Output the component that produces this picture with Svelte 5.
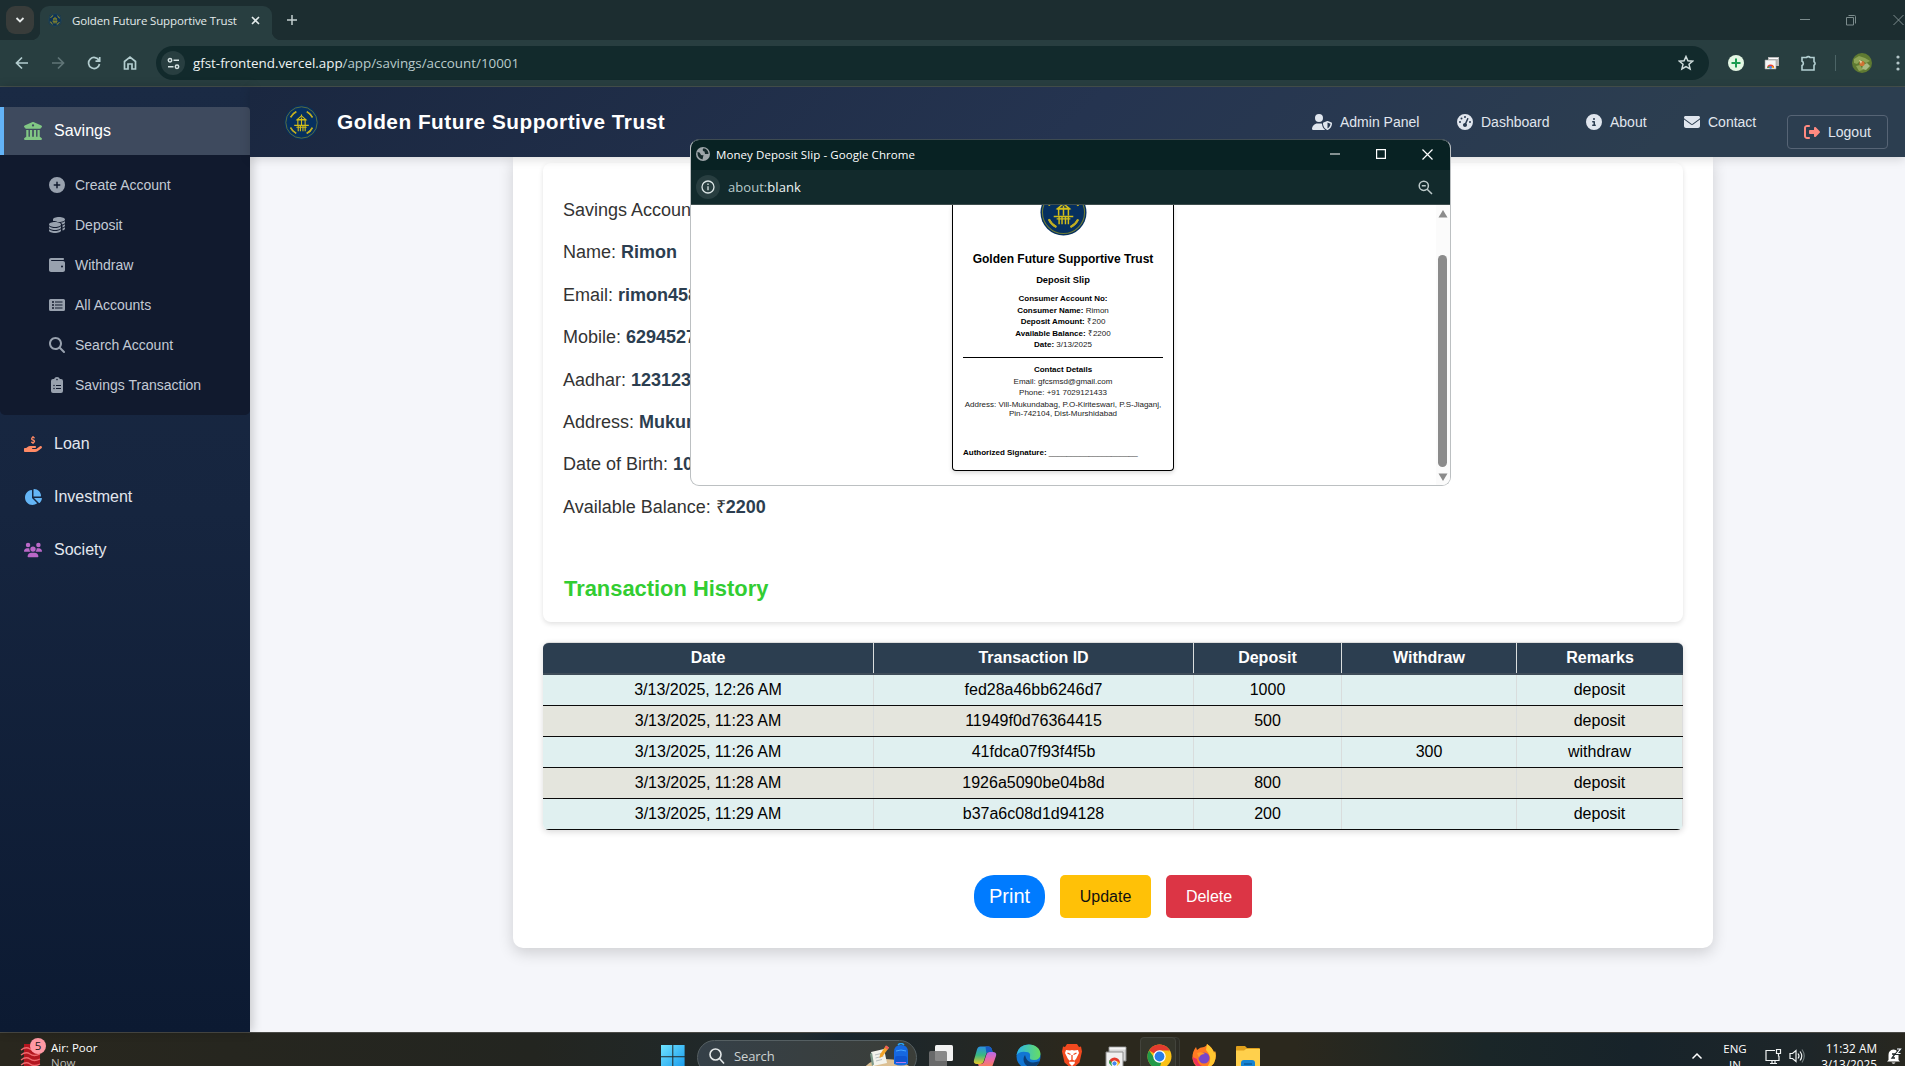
<script>
  const subItems = [
    { label: 'Create Account', icon: 'plus' },
    { label: 'Deposit', icon: 'coins' },
    { label: 'Withdraw', icon: 'wallet' },
    { label: 'All Accounts', icon: 'list' },
    { label: 'Search Account', icon: 'search' },
    { label: 'Savings Transaction', icon: 'clipboard' }
  ];
  const sections = [
    { label: 'Loan', icon: 'hand', tone: 'coral' },
    { label: 'Investment', icon: 'pie', tone: 'blue' },
    { label: 'Society', icon: 'users', tone: 'purple' }
  ];
  const navItems = [
    { label: 'Admin Panel', icon: 'shield', cls: 'admin' },
    { label: 'Dashboard', icon: 'gauge', cls: 'dash' },
    { label: 'About', icon: 'info', cls: 'about' },
    { label: 'Contact', icon: 'mail', cls: 'contact' }
  ];
  const details = [
    ['Savings Account No: ', '10001'],
    ['Name: ', 'Rimon'],
    ['Email: ', 'rimon458@gmail.com'],
    ['Mobile: ', '6294527000'],
    ['Aadhar: ', '123123123123'],
    ['Address: ', 'Mukundabag'],
    ['Date of Birth: ', '10/10/2000'],
    ['Available Balance: ₹', '2200']
  ];
  const rows = [
    ['3/13/2025, 12:26 AM', 'fed28a46bb6246d7', '1000', '', 'deposit'],
    ['3/13/2025, 11:23 AM', '11949f0d76364415', '500', '', 'deposit'],
    ['3/13/2025, 11:26 AM', '41fdca07f93f4f5b', '', '300', 'withdraw'],
    ['3/13/2025, 11:28 AM', '1926a5090be04b8d', '800', '', 'deposit'],
    ['3/13/2025, 11:29 AM', 'b37a6c08d1d94128', '200', '', 'deposit']
  ];
  const slip = [
    ['Consumer Account No:', ''],
    ['Consumer Name:', 'Rimon'],
    ['Deposit Amount:', '₹200'],
    ['Available Balance:', '₹2200'],
    ['Date:', '3/13/2025']
  ];
  const icons = {
    bank: { w: 512, d: 'M243.4 2.6l-224 96c-14 6-21.8 21-18.7 35.8S16.8 160 32 160v8c0 13.3 10.7 24 24 24H456c13.3 0 24-10.7 24-24v-8c15.2 0 28.3-10.7 31.3-25.6s-4.8-29.9-18.7-35.8l-224-96c-8-3.4-17.2-3.4-25.2 0zM128 224H64V420.3c-.6 .3-1.2 .7-1.8 1.1l-48 32c-11.7 7.8-17 22.4-12.9 35.9S17.9 512 32 512H480c14.1 0 26.5-9.2 30.6-22.7s-1.1-28.1-12.9-35.9l-48-32c-.6-.4-1.2-.7-1.8-1.1V224H384V416H344V224H280V416H232V224H168V416H128V224zM256 64a32 32 0 1 1 0 64 32 32 0 1 1 0-64z' },
    plus: { w: 512, d: 'M256 512A256 256 0 1 0 256 0a256 256 0 1 0 0 512zM232 344V280H168c-13.3 0-24-10.7-24-24s10.7-24 24-24h64V168c0-13.3 10.7-24 24-24s24 10.7 24 24v64h64c13.3 0 24 10.7 24 24s-10.7 24-24 24H280v64c0 13.3-10.7 24-24 24s-24-10.7-24-24z' },
    coins: { w: 512, d: 'M320 0C426 0 512 36 512 80S426 160 320 160c-17 0-34-1-50-3C236 138 186 128 160 128c-10 0-20 0-30 1C129 110 128 95 128 80C128 36 214 0 320 0zM512 134v42c0 27-33 51-83 66c-6-25-26-45-52-60c54-8 101-25 135-48zM512 230v42c0 27-32 51-80 65v-62c32-11 59-26 80-45zM512 326v42c0 27-32 50-80 65v-62c32-11 59-26 80-45zM192 160c106 0 192 36 192 80s-86 80-192 80S0 284 0 240s86-80 192-80zM0 294c45 36 117 58 192 58s147-22 192-58v42c0 44-86 80-192 80S0 380 0 336v-42zM0 390c45 36 117 58 192 58s147-22 192-58v42c0 44-86 80-192 80S0 476 0 432v-42z' },
    wallet: { w: 512, d: 'M64 32C28.7 32 0 60.7 0 96V416c0 35.3 28.7 64 64 64H448c35.3 0 64-28.7 64-64V192c0-35.3-28.7-64-64-64H80c-8.8 0-16-7.2-16-16s7.2-16 16-16H448c17.7 0 32-14.3 32-32s-14.3-32-32-32H64zM416 272a32 32 0 1 1 0 64 32 32 0 1 1 0-64z' },
    list: { w: 512, d: 'M48 64H464a48 48 0 0 1 48 48V400a48 48 0 0 1-48 48H48a48 48 0 0 1-48-48V112A48 48 0 0 1 48 64zM128 128a32 32 0 1 0 0 64 32 32 0 1 0 0-64zM128 224a32 32 0 1 0 0 64 32 32 0 1 0 0-64zM128 320a32 32 0 1 0 0 64 32 32 0 1 0 0-64zM192 144v32H432v-32zM192 240v32H432v-32zM192 336v32H432v-32z' },
    search: { w: 512, d: 'M416 208c0 45.9-14.9 88.3-40 122.7L502.6 457.4c12.5 12.5 12.5 32.8 0 45.3s-32.8 12.5-45.3 0L330.7 376c-34.4 25.2-76.8 40-122.7 40C93.1 416 0 322.9 0 208S93.1 0 208 0S416 93.1 416 208zM208 352a144 144 0 1 0 0-288 144 144 0 1 0 0 288z' },
    clipboard: { w: 384, d: 'M102 64C110 26 145 0 192 0s82 26 90 64H320a64 64 0 0 1 64 64V448a64 64 0 0 1-64 64H64a64 64 0 0 1-64-64V128A64 64 0 0 1 64 64zM192 56a26 26 0 1 0 0 52 26 26 0 1 0 0-52zM96 248a24 24 0 1 0 0 48 24 24 0 1 0 0-48zM96 344a24 24 0 1 0 0 48 24 24 0 1 0 0-48zM160 256v32H320v-32zM160 352v32H320v-32z' },
    hand: { w: 576, d: 'M559.7 392.2c17.8-13.1 21.6-38.1 8.5-55.9s-38.1-21.6-55.9-8.5L392.6 416H272c-8.8 0-16-7.2-16-16s7.2-16 16-16h16 64c17.7 0 32-14.3 32-32s-14.3-32-32-32H288 272 193.7c-29.1 0-57.3 9.9-80 28L68.8 384H32c-17.7 0-32 14.3-32 32v64c0 17.7 14.3 32 32 32H192 352.5c29 0 57.3-9.3 80.7-26.5l126.6-93.3zM268 0h40v32l36 8v38c-30-8-78-14-78 6c0 26 90 14 90 84c0 34-22 50-48 56v32h-40v-30l-44-12v-40c36 16 92 20 92-4c0-28-90-18-90-86c0-28 18-48 42-54z' },
    pie: { w: 576, d: 'M304 240V16.6c0-9 7-16.6 16-16.6C443.7 0 544 100.3 544 224c0 9-7.6 16-16.6 16H304zM32 272C32 150.7 122.1 50.3 239 34.3c9.2-1.3 17 6.1 17 15.4V288L412.5 444.5c6.7 6.7 6.2 17.7-1.5 23.1C371.8 495.6 323.8 512 272 512C139.5 512 32 404.6 32 272zm526.4 16c9.3 0 16.6 7.8 15.4 17c-7.7 55.9-34.6 105.6-73.9 142.3c-6 5.6-15.4 5.2-21.2-.7L320 288H558.4z' },
    users: { w: 640, d: 'M144 0a80 80 0 1 1 0 160A80 80 0 1 1 144 0zM512 0a80 80 0 1 1 0 160A80 80 0 1 1 512 0zM0 298.7C0 239.8 47.8 192 106.7 192h42.7c15.9 0 31 3.5 44.6 9.7c-1.3 7.2-1.9 14.7-1.9 22.3c0 38.2 16.8 72.5 43.3 96c-.2 0-.4 0-.7 0H21.3C9.6 320 0 310.4 0 298.7zM405.3 320c-.2 0-.4 0-.7 0c26.6-23.5 43.3-57.8 43.3-96c0-7.6-.7-15-1.9-22.3c13.6-6.3 28.7-9.7 44.6-9.7h42.7C592.2 192 640 239.8 640 298.7c0 11.8-9.6 21.3-21.3 21.3H405.3zM224 224a96 96 0 1 1 192 0 96 96 0 1 1 -192 0zM128 485.3C128 411.7 187.7 352 261.3 352H378.7C452.3 352 512 411.7 512 485.3c0 14.7-11.9 26.7-26.7 26.7H154.7c-14.7 0-26.7-11.9-26.7-26.7z' },
    shield: { w: 640, d: 'M224 256A128 128 0 1 0 224 0a128 128 0 1 0 0 256zm-45.7 48C79.8 304 0 383.8 0 482.3C0 498.7 13.3 512 29.7 512H418.3c1.8 0 3.5-.2 5.3-.5c-76.3-55.1-99.8-141-103.1-200.2c-16.1-4.8-33.1-7.3-50.7-7.3H178.3zm308.8-78.3l-120 48C358 277.4 352 286.2 352 296c0 63.3 25.9 168.8 134.8 214.2c5.9 2.5 12.6 2.5 18.5 0C614.1 464.8 640 359.3 640 296c0-9.8-6-18.6-15.1-22.3l-120-48c-5.7-2.3-12.1-2.3-17.8 0zM591.4 312c-3.9 50.7-27.2 116.7-95.4 149.7V273.8L591.4 312z' },
    gauge: { w: 512, d: 'M0 256a256 256 0 1 1 512 0A256 256 0 1 1 0 256zM288 96a32 32 0 1 0 -64 0 32 32 0 1 0 64 0zM256 416c35.3 0 64-28.7 64-64c0-17.4-6.9-33.1-18.1-44.6L366 161.7c5.3-12.1-.2-26.3-12.3-31.6s-26.3 .2-31.6 12.3L257.9 288c-.6 0-1.3 0-1.9 0c-35.3 0-64 28.7-64 64s28.7 64 64 64zM176 144a32 32 0 1 0 -64 0 32 32 0 1 0 64 0zM96 288a32 32 0 1 0 0-64 32 32 0 1 0 0 64zm352-32a32 32 0 1 0 -64 0 32 32 0 1 0 64 0z' },
    info: { w: 512, d: 'M256 512A256 256 0 1 0 256 0a256 256 0 1 0 0 512zM216 336h24V272H216c-13.3 0-24-10.7-24-24s10.7-24 24-24h48c13.3 0 24 10.7 24 24v88h8c13.3 0 24 10.7 24 24s-10.7 24-24 24H216c-13.3 0-24-10.7-24-24s10.7-24 24-24zm40-208a32 32 0 1 1 0 64 32 32 0 1 1 0-64z' },
    mail: { w: 512, d: 'M48 64C21.5 64 0 85.5 0 112c0 15.1 7.1 29.3 19.2 38.4L236.8 313.6c11.4 8.5 27 8.5 38.4 0L492.8 150.4c12.1-9.1 19.2-23.3 19.2-38.4c0-26.5-21.5-48-48-48H48zM0 176V384c0 35.3 28.7 64 64 64H448c35.3 0 64-28.7 64-64V176L294.4 339.2c-22.8 17.1-54 17.1-76.8 0L0 176z' },
    logout: { w: 512, d: 'M377.9 105.9L500.7 228.7c7.2 7.2 11.3 17.1 11.3 27.3s-4.1 20.1-11.3 27.3L377.9 406.1c-6.4 6.4-15 9.9-24 9.9c-18.7 0-33.9-15.2-33.9-33.9l0-62.1-128 0c-17.7 0-32-14.3-32-32l0-64c0-17.7 14.3-32 32-32l128 0 0-62.1c0-18.7 15.2-33.9 33.9-33.9c9 0 17.6 3.6 24 9.9zM160 96L96 96c-17.7 0-32 14.3-32 32l0 256c0 17.7 14.3 32 32 32l64 0c17.7 0 32 14.3 32 32s-14.3 32-32 32l-64 0c-53 0-96-43-96-96L0 128C0 75 43 32 96 32l64 0c17.7 0 32 14.3 32 32s-14.3 32-32 32z' }
  };
</script>

{#snippet glyph(name)}
  <svg class="glyph" viewBox="0 0 {icons[name].w} 512"><path fill-rule="evenodd" d={icons[name].d} /></svg>
{/snippet}

{#snippet crest()}
  <svg class="crest" viewBox="0 0 48 48" fill="none">
    <circle cx="24" cy="24" r="23.5" fill="#06305f" />
    <circle cx="24" cy="24" r="21.5" stroke="#6f7c36" stroke-width="1.1" />
    <circle cx="24" cy="24" r="16.5" stroke="#c0ad22" stroke-width="2" stroke-dasharray="11 15 11 14.900" transform="rotate(25 24 24)" />
    <circle cx="24" cy="24" r="16.5" stroke="#c0ad22" stroke-width="2" stroke-dasharray="11 15 11 14.900" transform="rotate(205 24 24)" />
    <path d="M24 13v3M24 15l-6 5h12zM17 20.5h14M19 21v6M24 17v10M29 21v6M14 28h20M17 30.5h14M19.500 28v8M22.500 28v8M26 28v8M29 28v8" stroke="#d2bd18" stroke-width="1.5" />
  </svg>
{/snippet}

<div class="screen">
  <div class="tabstrip">
    <div class="tabmenu"><svg width="10" height="10" viewBox="0 0 10 10"><path d="M1.500 3 5 6.500 8.500 3" fill="none" stroke="#e4e8e8" stroke-width="1.8" /></svg></div>
    <div class="tab">
      <span class="fav">{@render crest()}</span>
      <span class="tabtitle">Golden Future Supportive Trust</span>
      <svg width="9" height="9" viewBox="0 0 9 9"><path d="M1 1l7 7M8 1 1 8" stroke="#e3ebeb" stroke-width="1.6" /></svg>
    </div>
    <svg class="newtab" width="12" height="12" viewBox="0 0 12 12"><path d="M6 1v10M1 6h10" stroke="#c4d0d0" stroke-width="1.5" /></svg>
    <div class="winctl">
      <svg width="10" height="12" viewBox="0 0 10 12"><path d="M0 5.500h10" stroke="#7c8c8d" /></svg>
      <svg width="11" height="12" viewBox="0 0 11 12"><path d="M.5 3.500h7v7.500h-7zM2.500 1.500h6q1 0 1 1v7" fill="none" stroke="#7c8c8d" /></svg>
      <svg width="11" height="12" viewBox="0 0 11 12"><path d="M.5 1l10 10M10.500 1l-10 10" stroke="#7c8c8d" /></svg>
    </div>
  </div>

  <div class="toolbar">
    <div class="toolicons">
      <svg width="14" height="14" viewBox="0 0 14 14"><path d="M13 7H2M7 1.500 1.500 7 7 12.500" /></svg>
      <svg class="dim" width="14" height="14" viewBox="0 0 14 14"><path d="M1 7h11M7 1.500 12.500 7 7 12.500" /></svg>
      <svg width="14" height="14" viewBox="0 0 14 14"><path d="M12 4.500A5.500 5.500 0 1 0 12.500 8M12.700 1v4.200H8.500" /></svg>
      <svg width="14" height="14" viewBox="0 0 14 14"><path d="M1.500 5.500 7 1.200l5.500 4.300V13H9V8H5v5H1.500z" /></svg>
    </div>
    <div class="omnibox">
      <div class="siteinfo"><svg width="13" height="13" viewBox="0 0 13 13" fill="none" stroke="#d5e2e2" stroke-width="1.5"><circle cx="3" cy="3.200" r="1.700" /><path d="M6.500 3.200h5.500M1 9.800h5.500" /><circle cx="10" cy="9.800" r="1.700" /></svg></div>
      <span class="url"><b>gfst-frontend.vercel.app</b>/app/savings/account/10001</span>
      <svg class="star" width="16" height="16" viewBox="0 0 16 16"><path d="M8 1.500l1.900 4.300 4.700.4-3.600 3.100 1.100 4.600L8 11.500l-4.100 2.400L5 9.300 1.400 6.200l4.700-.4z" fill="none" stroke="#cfdcdc" stroke-width="1.500" /></svg>
    </div>
    <div class="exts">
      <svg width="18" height="18" viewBox="0 0 18 18"><circle cx="9" cy="9" r="8" fill="#e4f7e4" /><path d="M9 4.500v9M4.500 9h9" stroke="#1b9c51" stroke-width="2" /></svg>
      <svg width="16" height="16" viewBox="0 0 16 16"><path d="M4 2h11v9H4z" fill="#b9b9b9" /><path d="M5 3.500h9" stroke="#fff" /><path d="M1 5h11v9H1z" fill="#f5f5f5" stroke="#999" stroke-width=".6" /><path d="M3 13a3.600 3.600 0 0 1 7.200 0z" fill="#ea4335" /><path d="M3 13l1.800-2 1 2z" fill="#34a853" /><path d="M10.200 13l-2-2-1 2z" fill="#fbbc05" /><circle cx="6.600" cy="12.400" r="1.300" fill="#4285f4" /></svg>
      <svg width="18" height="18" viewBox="0 0 18 18"><path d="M2 3.500h4.500a2 1.600 0 0 1 3.600 0H14v4.300a1.600 1.800 0 0 1 0 3.400V16H2v-4.500a2.300 2.300 0 0 0 0-4.200z" fill="none" stroke="#b3d0d2" stroke-width="1.600" /></svg>
      <span class="sep"></span>
      <svg width="20" height="20" viewBox="0 0 20 20"><circle cx="10" cy="10" r="10" fill="#5f7a32" /><path d="M2 6l5-3 6 2 5 3-4 2-5-3-4 4-3-1zM4 13l4-1 3 5-4 1z" fill="#8da456" /><path d="M11 12l4-2 3 3-4 4-4-1z" fill="#a7ba82" /><circle cx="10" cy="10.500" r="2.600" fill="#cf7132" /><path d="M7 7l3 1-1 3z" fill="#ddd0a0" /></svg>
      <svg width="4" height="16" viewBox="0 0 4 16" fill="#b4c6c8"><circle cx="2" cy="2" r="1.600" /><circle cx="2" cy="8" r="1.600" /><circle cx="2" cy="14" r="1.600" /></svg>
    </div>
  </div>

  <div class="app">
    <nav class="sidebar">
      <div class="item active"><span class="ic green">{@render glyph('bank')}</span>Savings</div>
      <div class="submenu">
        {#each subItems as s}
          <div class="sub"><span class="sic">{@render glyph(s.icon)}</span>{s.label}</div>
        {/each}
      </div>
      {#each sections as s}
        <div class="item"><span class="ic {s.tone}">{@render glyph(s.icon)}</span>{s.label}</div>
      {/each}
    </nav>

    <div class="main">
      <header>
        <span class="brandlogo">{@render crest()}</span>
        <h1>Golden Future Supportive Trust</h1>
        <div class="links">
          {#each navItems as n}
            <a class={n.cls} href="#top"><span class="nic">{@render glyph(n.icon)}</span>{n.label}</a>
          {/each}
        </div>
        <div class="logout"><span class="nic">{@render glyph('logout')}</span>Logout</div>
      </header>

      <section class="panel">
        <div class="card">
          {#each details as [k, v]}
            <p>{k}<strong>{v}</strong></p>
          {/each}
          <h2>Transaction History</h2>
        </div>
        <div class="table">
          <div class="tr head">
            <span>Date</span><span>Transaction ID</span><span>Deposit</span><span>Withdraw</span><span>Remarks</span>
          </div>
          {#each rows as r}
            <div class="tr">{#each r as c}<span>{c}</span>{/each}</div>
          {/each}
        </div>
        <div class="buttons">
          <button class="print">Print</button>
          <button class="update">Update</button>
          <button class="delete">Delete</button>
        </div>
      </section>
    </div>
  </div>

  <footer class="taskbar">
    <div class="weather">
      <svg width="28" height="29" viewBox="0 0 28 29"><path d="M5 6h16v20l-4 3H5z" fill="#b3161f" /><path d="M2 12q5-4 9-1t10 0M2 17q5-4 9-1t10 0M2 22q5-4 9-1t10 0M2 27q5-4 9-1t10 0" fill="none" stroke="#ee6a6e" stroke-width="1.300" /><circle cx="19" cy="8" r="8" fill="#ff99a4" /><text x="19" y="12.300" text-anchor="middle" font-size="11.500" fill="#1a1a1a">5</text></svg>
      <div class="wtext"><span>Air: Poor</span><span class="soft">Now</span></div>
    </div>
    <div class="dock">
      <svg class="win" width="24" height="24" viewBox="0 0 24 24"><defs><linearGradient id="wg" x1="0" y1="0" x2="1" y2="1"><stop offset="0" stop-color="#6fe3ff" /><stop offset="1" stop-color="#1598ec" /></linearGradient></defs><path d="M0 0h11.300v11.300H0zM12.300 0h11.300v11.300H12.300zM0 12.300h11.300V24H0zM12.300 12.300h11.300V24H12.300z" fill="url(#wg)" /></svg>
      <div class="searchbox">
        <svg width="16" height="16" viewBox="0 0 16 16" fill="none" stroke="#e3e7e8" stroke-width="1.600"><circle cx="6.500" cy="6.500" r="5.500" /><path d="M10.500 10.500 15 15.500" /></svg>
        <span>Search</span>
        <svg class="study" width="46" height="26" viewBox="0 0 46 26"><path d="M2 24q6-8 21-8t23 7v3H2z" fill="#dcc093" /><path d="M8 9l13-3 3 14-14 3z" fill="#f3f3ec" /><path d="M7 11l2-1.500 2 12-2 1.500z" fill="#7e9a8a" /><path d="M12 12l8-2M12.500 15l8-2M13 18l6-1.500" stroke="#a9b1b4" stroke-width=".8" /><path d="M23 2.500l3 2-6.500 9-3 1.500.5-3.500z" fill="#f2a329" /><path d="M23 2.500l3 2-1.300 2.200-3-2z" fill="#ef5c58" /><path d="M31 9q0-7 7-7t7 7v12q-7 3-14 0z" fill="#1668e0" /><path d="M35 2q3-3 6 0" fill="none" stroke="#2aa3f5" stroke-width="1.500" /><rect x="32" y="13" width="12" height="7" rx="2" fill="#0f55d0" /><path d="M33 8q5-2 10 0" stroke="#45a5ff" fill="none" /><path d="M33 19.500h10" stroke="#b678e8" /></svg>
      </div>
      <svg class="tv" width="25" height="24" viewBox="0 0 25 24"><rect x="6" y="0" width="18" height="16" rx="1.500" fill="#f2f2f2" /><rect x="0" y="6" width="18" height="17" rx="1.500" fill="#777" fill-opacity=".85" /></svg>
      <svg class="cop" width="24" height="24" viewBox="0 0 24 24"><defs><linearGradient id="ca" x1="0" y1="0" x2="0" y2="1"><stop offset="0" stop-color="#2a8fe5" /><stop offset=".5" stop-color="#39b981" /><stop offset="1" stop-color="#e9c829" /></linearGradient><linearGradient id="cb" x1="0" y1="0" x2="0" y2="1"><stop offset="0" stop-color="#b56bea" /><stop offset=".5" stop-color="#ec68a6" /><stop offset="1" stop-color="#f9834f" /></linearGradient></defs><path d="M7.500 1.500h8.500q2 0 2.800 2.500l.8 3h-3.500q-2.500 0-3.300 3l-2 6q-.8 3-3.500 3H4Q0 19 1 15L4 4.500q.8-3 3.500-3z" fill="url(#ca)" /><path d="M12.500 1.500H16q2 0 2.800 2.500l.8 3h-3.500q-2 0-2.700 1.500z" fill="#175ac4" /><path d="M16.500 22.500H8q-2 0-2.600-2.500l-.3-1h2.400q3 0 3.800-3l2-6q.9-3 3.500-3H20q4 0 3 4l-3 8.500q-.8 3-3.500 3z" fill="url(#cb)" /></svg>
      <svg class="edge" width="25" height="25" viewBox="0 0 25 25"><defs><linearGradient id="eg"><stop offset="0" stop-color="#2bb5e9" /><stop offset="1" stop-color="#67dd61" /></linearGradient></defs><circle cx="12.500" cy="12.500" r="12" fill="#1176d3" /><path d="M.6 11Q2 .5 13 .5C20 .5 24.500 5 24.500 10q-.4 6-6.500 6-5 0-4-3 1-5-4-5-6-1-9.400 3z" fill="url(#eg)" /><path d="M9 11q-3 4 0 9 3 4 9 3 4-2 6-6-11 4-14-3z" fill="#0b3f77" /></svg>
      <svg class="brave" width="22" height="25" viewBox="0 0 22 25"><path d="M6 0h10l2 3 2-.5 1 5-2.500 11L11 25l-7.500-6.500L1 7.500l1-5L4 3z" fill="#f1491f" /><path d="M5 6l4 .5 2-.5 2 .5 4-.5 1 3-3 6-2 2 1 2-3 3-3-3 1-2-2-2-3-6z" fill="#fff" /><path d="M6.500 9l3 1.500M15.500 9l-3 1.500M11 11v5l-2 1h4l-2-1" stroke="#f1491f" stroke-width="1.300" fill="none" /></svg>
      <svg class="rdp" width="24" height="24" viewBox="0 0 24 24"><path d="M5 1h17v14H5z" fill="#d8d8d8" stroke="#8b8b8b" /><path d="M5.500 2.500h16" stroke="#f4f4f4" stroke-width="2" /><path d="M2 6h17v16H2z" fill="#f0f0f0" stroke="#8b8b8b" /><path d="M5 17a5.500 5.500 0 0 1 11 0z" fill="#e33b2e" /><path d="M5 17l.5-3 4 4-2 2z" fill="#2ca24c" /><path d="M16 17l-3-2-1 3 1 2z" fill="#f9bd15" /><circle cx="10.500" cy="17.500" r="2.600" fill="#4486ee" stroke="#fff" /></svg>
      <div class="chromestack"><div class="chromebox"><svg width="25" height="25" viewBox="0 0 25 25"><circle cx="12.500" cy="12.500" r="12" fill="#fbc116" /><path d="M12.500 12.500 2.100 6.500a12 12 0 0 1 20.800 0z" fill="#e33b2e" /><path d="M2.100 6.500l6 8.500 6 4-1.600 5.500A12 12 0 0 1 2.100 6.500z" fill="#229a48" /><path d="M12.500 6.500H23l-9 6z" fill="#fbc116" /><circle cx="12.500" cy="12.500" r="6.200" fill="#fff" /><circle cx="12.500" cy="12.500" r="4.900" fill="#2b7de9" /></svg></div></div>
      <svg class="fox" width="24" height="25" viewBox="0 0 24 25"><path d="M12 3q3-1 3-3 6 4 7 9l1-2q2 6-1 12-4 6-11 6Q2 24 .5 15 0 8 4 3l1 3q3-3 7-3z" fill="#ff7a22" /><path d="M15 0q6 4 7 9l1-2q2 6-1 12-3 4-8 5 5-5 4-11-1-4-4-7z" fill="#ffc630" /><path d="M.5 13q1 9 9 11.500l6-.5Q6 22 5 15z" fill="#f0325c" /><circle cx="12" cy="14" r="5.500" fill="#7846c8" /><path d="M5 9q5-2 8 1-5 0-6 4z" fill="#ff9a28" /></svg>
      <svg class="folder" width="25" height="24" viewBox="0 0 25 24"><path d="M1 1h8l2 2h12q1 0 1 1v19H0V2q0-1 1-1z" fill="#e0a01c" /><path d="M0 5.500h8l2-1.500h14v20H0z" fill="#ffd04c" /><path d="M5 24v-6q0-3 3-3h8q3 0 3 3v6z" fill="#1684d3" /><path d="M8 19h8" stroke="#0b5c9c" stroke-width="1.500" /></svg>
    </div>
    <div class="tray">
      <svg class="up" width="12" height="8" viewBox="0 0 12 8"><path d="M1.500 6.500 6 2l4.500 4.500" fill="none" stroke="#fff" stroke-width="1.500" /></svg>
      <div class="lang"><span>ENG</span><span>IN</span></div>
      <svg class="net" width="17" height="17" viewBox="0 0 17 17"><path d="M10 2.500H1v10h13V8M5 15.500h7M7 12.500v3M10 12.500v3M11.500 1.500h4v4h-4zM13.500 5.500v3" fill="none" stroke="#f0f3f3" stroke-width="1.200" /></svg>
      <svg class="vol" width="17" height="16" viewBox="0 0 17 16" fill="none" stroke="#f0f3f3" stroke-width="1.200"><path d="M1 5.500h2.500L7 2.500v11l-3.500-3H1zM9 5.500q2 2.500 0 5M11 3.500q3.500 4.500 0 9" /><path d="M13 1.500q4.500 6.500 0 13" stroke="#6f7a7b" /></svg>
      <div class="clock"><span>11:32 AM</span><span>3/13/2025</span></div>
      <svg class="bell" width="15" height="16" viewBox="0 0 15 16"><path d="M1.500 12V7q0-5 5-5.500 5 .5 5 5.500v5l1.500 1.500H0zM4.500 14.500h4q-2 2.500-4 0z" fill="#fff" /><path d="M5 6h3L5 10h3" stroke="#20292b" stroke-width="1.300" fill="none" /><path d="M10 1h3.500L10 5.500h3.500" stroke="#20292b" stroke-width="3.200" fill="none" /><path d="M10 1h3.500L10 5.500h3.500" stroke="#fff" stroke-width="1.200" fill="none" /></svg>
    </div>
  </footer>

  <div class="popup">
    <div class="ptitle">
      <svg width="14" height="14" viewBox="0 0 14 14"><circle cx="7" cy="7" r="7" fill="#9da5a9" /><path d="M1.500 5q2.500 0 3 2t3 1l-1 4.500Q1 11 1.500 5zM7 1.500Q6 4 8.500 4.500L9 7l3.500 0Q12.500 3 9 1.500z" fill="#15292b" /></svg>
      <span>Money Deposit Slip - Google Chrome</span>
      <div class="pctl">
        <svg width="10" height="10" viewBox="0 0 10 10"><path d="M0 5h10" stroke="#fff" stroke-width="1.200" /></svg>
        <svg width="10" height="10" viewBox="0 0 10 10"><path d="M.6.6h8.800v8.800H.6z" fill="none" stroke="#fff" stroke-width="1.200" /></svg>
        <svg width="11" height="11" viewBox="0 0 11 11"><path d="M.5.5l10 10M10.500.5l-10 10" stroke="#fff" stroke-width="1.200" /></svg>
      </div>
    </div>
    <div class="paddr">
      <div class="pinfo"><svg width="14" height="14" viewBox="0 0 14 14" fill="none" stroke="#dbe5e5" stroke-width="1.300"><circle cx="7" cy="7" r="6" /><path d="M7 6.200v4M7 3.500v1.400" /></svg></div>
      <span>about:<b>blank</b></span>
      <svg width="15" height="15" viewBox="0 0 15 15" fill="none" stroke="#bccaca" stroke-width="1.500"><circle cx="5.800" cy="5.800" r="4.600" /><path d="M9.200 9.200 14 14M3.800 5.800h4" /></svg>
    </div>
    <div class="pbody">
      <div class="slip">
        <div class="slogo">{@render crest()}</div>
        <h3>Golden Future Supportive Trust</h3>
        <h4>Deposit Slip</h4>
        <div class="lines">
          {#each slip as [k, v]}<p><b>{k}</b> {v}</p>{/each}
        </div>
        <div class="rule"></div>
        <div class="lines contact">
          <p><b>Contact Details</b></p>
          <p>Email: gfcsmsd@gmail.com</p>
          <p>Phone: +91 7029121433</p>
          <p class="addr">Address: Vill-Mukundabag, P.O-Kiriteswari, P.S-Jiaganj, Pin-742104, Dist-Murshidabad</p>
        </div>
        <div class="sign"><b>Authorized Signature:</b> ____________________</div>
      </div>
      <div class="scroll">
        <svg width="10" height="8" viewBox="0 0 10 8"><path d="M5 0l4.500 7.500H.5z" fill="#8b8b8b" /></svg>
        <div class="thumb"></div>
        <svg width="10" height="8" viewBox="0 0 10 8"><path d="M5 8L.5.5h9z" fill="#8b8b8b" /></svg>
      </div>
    </div>
  </div>
</div>

<style>
  :global(body) { margin: 0; overflow: hidden; }
  * { box-sizing: border-box; }
  .screen { position: relative; width: 1905px; height: 1066px; overflow: hidden; display: flex; flex-direction: column; font-family: 'Liberation Sans', Arial, sans-serif; background: #f5f6fa; }
  svg { display: block; flex: none; }
  .glyph { height: 100%; width: 100%; fill: currentColor; }
  .crest { width: 100%; height: 100%; }

  .tabstrip { height: 40px; background: #1c2d30; display: flex; align-items: center; flex: none; padding-left: 6px; font-family: 'Open Sans', 'Noto Sans', sans-serif; }
  .tabmenu { width: 28px; height: 28px; border-radius: 9px; background: #383c3a; display: grid; place-items: center; }
  .tab { position: relative; align-self: flex-end; margin-left: 6px; width: 232px; height: 34px; background: #283e40; border-radius: 9px 9px 0 0; display: flex; align-items: center; padding: 0 12px 6px 8px; }
  .tab::before, .tab::after { content: ''; position: absolute; bottom: 0; width: 9px; height: 9px; }
  .tab::before { left: -9px; background: radial-gradient(circle at 0 0, transparent 9px, #283e40 9.5px); }
  .tab::after { right: -9px; background: radial-gradient(circle at 100% 0, transparent 9px, #283e40 9.5px); }
  .fav { width: 14px; height: 14px; opacity: .8; }
  .tabtitle { margin-left: 10px; flex: 1; font-size: 11.5px; letter-spacing: -.14px; color: #e3ebeb; white-space: nowrap; }
  .newtab { margin-left: 14px; }
  .winctl { margin-left: auto; display: flex; gap: 36px; padding-right: 1px; }

  .toolbar { height: 47px; background: #283e40; border-bottom: 1px solid #45504c; display: flex; align-items: center; flex: none; padding-left: 15px; font-family: 'Open Sans', 'Noto Sans', sans-serif; }
  .toolicons { display: flex; gap: 22px; }
  .toolicons path { fill: none; stroke: #b3cdcf; stroke-width: 1.7; }
  .toolicons .dim path { stroke: #607577; }
  .omnibox { margin-left: 19px; width: 1553px; height: 34px; border-radius: 17px; background: #122a2c; display: flex; align-items: center; padding: 0 15px 0 5px; }
  .siteinfo { width: 24px; height: 24px; border-radius: 50%; background: #283e40; display: grid; place-items: center; }
  .url { flex: 1; margin-left: 8px; font-size: 13.4px; color: #b9cacb; letter-spacing: -.02px; }
  .url b { font-weight: 400; color: #eef4f4; }
  .exts { display: flex; align-items: center; margin-left: 18px; }
  .exts svg:nth-child(2) { margin-left: 19px; }
  .exts svg:nth-child(3) { margin-left: 20px; }
  .sep { width: 1px; height: 16px; background: #4c6466; margin: 0 16px 0 17px; }
  .exts svg:nth-child(6) { margin-left: 24px; }

  .app { height: 945px; display: flex; flex: none; }
  .sidebar { width: 250px; background: linear-gradient(180deg, #1a2a44 0%, #16253f 45%, #0c1a32 100%); padding-top: 20px; box-shadow: 2px 0 10px rgba(0, 0, 0, .2); position: relative; }
  .item { height: 48px; margin-bottom: 5px; padding-left: 24px; display: flex; align-items: center; font-size: 16px; color: #e3e7ee; }
  .item.active { margin: 0; padding-left: 20px; border-left: 4px solid #63b3f7; border-radius: 0 4px 0 0; background: #3e4a5e; color: #fff; }
  .ic { width: 18px; height: 18px; margin-right: 12px; padding: 1px 0; }
  .item.active .ic { padding: 0; }
  .green { color: #81c784; }
  .coral { color: #ff8a65; }
  .blue { color: #64b5f6; }
  .purple { color: #ba68c8; }
  .submenu { height: 260px; padding: 10px 0; background: #111a2e; border-radius: 0 0 5px 5px; margin-bottom: 5px; }
  .sub { height: 40px; display: flex; align-items: center; padding-left: 49px; font-size: 14px; color: #c3cad5; }
  .sic { width: 16px; height: 16px; margin-right: 10px; color: #98a1ae; }

  .main { flex: 1; display: flex; flex-direction: column; min-width: 0; }
  header { width: 100%; height: 70px; flex: none; background: linear-gradient(135deg, #1a2740 0%, #253450 50%, #2c3e50 85%); display: flex; align-items: center; padding-left: 34px; box-shadow: 0 2px 10px rgba(0, 0, 0, .15); z-index: 1; }
  .brandlogo { width: 35px; height: 35px; }
  h1 { margin: 0 0 0 18px; font-size: 20.8px; letter-spacing: .5px; color: #fff; white-space: nowrap; width: 330px; }
  .links { display: flex; margin-left: 645px; width: 475px; }
  .links a { display: flex; align-items: center; font-size: 14px; color: #e0e6ee; text-decoration: none; white-space: nowrap; }
  .nic { width: 16px; height: 16px; margin-right: 8px; }
  .admin { width: 145px; }
  .admin .nic { width: 20px; }
  .dash { width: 129px; }
  .about { width: 98px; }
  .logout { width: 101px; height: 34px; border: 1px solid #566475; border-radius: 4px; display: flex; align-items: center; padding-left: 16px; font-size: 14px; color: #e0e6ee; margin-top: 20px; }
  .logout .nic { color: #ff8a80; }

  .panel { width: 1200px; height: 791px; margin-left: 263px; padding: 6px 30px 0; background: #fff; border-radius: 0 0 10px 10px; box-shadow: 0 5px 15px rgba(0, 0, 0, .16); }
  .card { height: 459px; border-radius: 8px; box-shadow: 0 2px 5px rgba(0, 0, 0, .12); padding: 26px 20px 0; }
  .card p { margin: 0; height: 42.4px; line-height: 42.4px; font-size: 18px; color: #333; white-space: nowrap; }
  .card strong { color: #2c3e50; }
  h2 { margin: 47px 0 0 1px; font-size: 21.9px; line-height: 28px; color: #32cd32; }
  .table { margin-top: 20px; border-radius: 6px; overflow: hidden; box-shadow: 0 2px 6px rgba(0, 0, 0, .15); border-top: 1px solid #ddd; }
  .tr { display: grid; grid-template-columns: 331px 320px 148px 175px 166px; height: 31px; border-bottom: 1px solid #0a0a0a; background: #e0f0f0; font-size: 16px; color: #000; }
  .tr:nth-child(odd) { background: #e4e5dd; }
  .tr span { display: grid; place-items: center; border-right: 1px solid #d9dddd; }
  .tr span:last-child { border-color: #ddd; }
  .tr.head { height: 32px; background: #2c3e50; color: #fff; font-weight: 700; border-bottom: 2px solid #3f4c59; }
  .tr.head span:last-child { border: 0; }
  .buttons { margin-top: 45px; display: flex; justify-content: center; gap: 15px; }
  button { height: 43px; border: 0; border-radius: 5px; font: 16px 'Liberation Sans', sans-serif; padding: 0; }
  .print { width: 71px; border-radius: 20px; background: #007bff; color: #fff; font-size: 20px; }
  .update { width: 91px; background: #ffc107; color: #111; }
  .delete { width: 86px; background: #dc3545; color: #fff; }

  .taskbar { height: 34px; flex: none; display: flex; align-items: flex-start; background: linear-gradient(90deg, #29271e 0%, #26261f 12%, #232520 28%, #1f2a2e 42%, #18262f 44%, #2b281d 56%, #2b281d 68%, #1a2628 78%, #17232a 86%, #1e2629 95%, #28271f 100%); border-top: 1px solid #4a4a46; font-family: 'Open Sans', 'Noto Sans', sans-serif; overflow: hidden; color: #fff; font-size: 11.5px; line-height: 16px; }
  .weather { display: flex; width: 661px; padding: 5px 0 0 19px; }
  .weather text { font-family: 'Open Sans', sans-serif; }
  .wtext { display: flex; flex-direction: column; margin: 2px 0 0 4px; }
  .soft { color: #bdbdb8; margin-top: -1px; }
  .dock { display: flex; align-items: flex-start; width: 1031px; padding-top: 11px; }
  .win { margin-top: 1px; }
  .searchbox { margin: -4px 0 0 12px; width: 220px; height: 35px; border-radius: 18px; border: 1px solid #555f62; background: linear-gradient(90deg, #354048, #3b3e39); display: flex; align-items: center; padding: 0 7px 3px 11px; }
  .searchbox span { margin-left: 9px; flex: 1; font-size: 13px; letter-spacing: -.1px; color: #cdd2d2; }
  .tv { margin: 1px 0 0 12px; }
  .cop { margin: 1px 0 0 19px; }
  .edge { margin-left: 19px; }
  .brave { margin-left: 20px; }
  .rdp { margin-left: 21px; margin-top: 2px; }
  .chromestack { width: 40px; height: 34px; margin: -7px 0 0 12px; border: 1px solid #3b3c34; border-radius: 4px; background: #2c2c25; }
  .chromebox { width: 36px; height: 34px; margin: -1px 0 0 -1px; padding: 6px 0 0 6px; border: 1px solid #43443c; border-radius: 4px; background: #34352b; }
  .fox { margin-left: 12px; }
  .folder { margin: 1px 0 0 20px; }
  .tray { display: flex; flex: 1; align-items: flex-start; }
  .up { margin: 19px 0 0 -1px; }
  .lang { display: flex; flex-direction: column; align-items: center; margin: 8px 0 0 20px; width: 24px; }
  .net { margin: 15px 0 0 18px; }
  .vol { margin: 15px 0 0 7px; }
  .clock { display: flex; flex-direction: column; align-items: flex-end; margin: 7px 0 0 14px; width: 57px; font-size: 11.8px; white-space: nowrap; }
  .bell { margin: 15px 0 0 10px; }

  .popup { position: absolute; left: 690px; top: 139px; width: 761px; height: 347px; border: 1px solid #bcc0c2; border-top-color: #3e4b52; border-radius: 9px; overflow: hidden; background: #fff; z-index: 5; display: flex; flex-direction: column; font-family: 'Open Sans', 'Noto Sans', sans-serif; }
  .ptitle { height: 30px; flex: none; background: #082223; display: flex; align-items: center; padding: 0 17px 2px 5px; color: #fff; font-size: 11.5px; letter-spacing: .08px; }
  .ptitle > span { margin-left: 6px; flex: 1; }
  .pctl { display: flex; gap: 36px; }
  .paddr { height: 35px; flex: none; background: #122a2c; border-bottom: 1px solid #3e4e4e; display: flex; align-items: center; padding: 0 17px 0 5px; font-size: 13px; color: #b9cacb; letter-spacing: .05px; }
  .pinfo { width: 24px; height: 24px; border-radius: 50%; background: #283e40; display: grid; place-items: center; }
  .paddr > span { margin-left: 8px; flex: 1; }
  .paddr b { font-weight: 400; color: #eef4f4; }
  .pbody { flex: 1; min-height: 0; overflow: hidden; display: flex; justify-content: space-between; padding-left: 261px; font-family: 'Liberation Sans', sans-serif; }
  .slip { width: 222px; height: 266px; border: 1.5px solid #000; border-top: 0; border-radius: 0 0 4px 4px; box-shadow: 0 2px 4px rgba(0, 0, 0, .15); text-align: center; padding: 0 10px; color: #222; }
  .slip b { color: #000; }
  .slogo { width: 47px; height: 47px; margin: -16px auto 0; }
  h3 { margin: 15px 0 0; font-size: 12px; line-height: 16px; color: #000; white-space: nowrap; }
  h4 { margin: 7px 0 0; font-size: 9.3px; line-height: 12px; color: #000; }
  .lines { margin-top: 7px; font-size: 8px; }
  .lines p { margin: 0; height: 11.6px; line-height: 11.6px; white-space: nowrap; }
  .rule { height: 1px; background: #000; margin: 6px 0 6px; }
  .lines.contact { margin: 0 -4px; }
  .lines p.addr { line-height: 9.2px; height: 20px; white-space: normal; padding-top: 1px; }
  .sign { margin-top: 28px; text-align: left; font-size: 8px; line-height: 12px; white-space: nowrap; }
  .scroll { width: 14px; background: #fbfbfb; display: flex; flex-direction: column; align-items: center; padding: 5px 1px 4px 0; }
  .thumb { width: 9px; height: 212px; border-radius: 5px; background: #8b8b8b; margin: 37px 0 6px; }
</style>
